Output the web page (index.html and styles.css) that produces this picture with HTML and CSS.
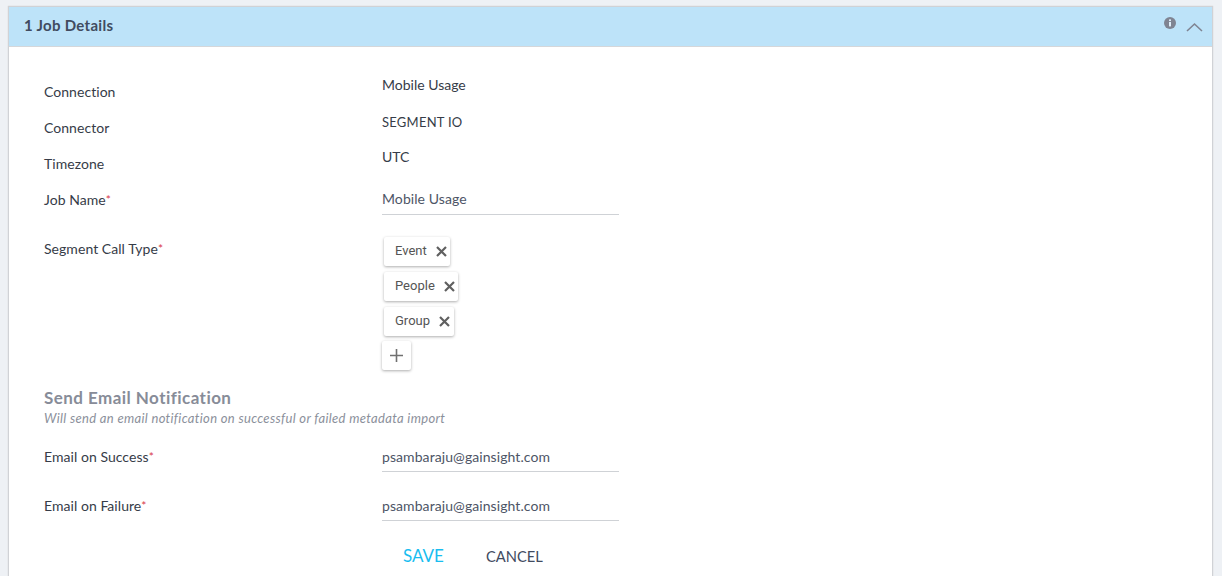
FILE: index.html
```html
<!DOCTYPE html>
<html lang="en">
<head>
<meta charset="utf-8">
<title>Job Details</title>
<link rel="stylesheet" href="styles.css">
</head>
<body>
<section class="card">
  <header class="card-head">
    <h2 class="card-title">1 Job Details</h2>
    <div class="head-icons">
      <svg class="info" width="12" height="12" viewBox="0 0 12 12"><circle cx="6" cy="6" r="6" fill="#7f8492"/><rect x="5" y="5" width="2" height="4.4" fill="#dfeefa"/><rect x="5" y="2.4" width="2" height="1.7" fill="#dfeefa"/></svg>
      <svg class="chev" width="17" height="10" viewBox="0 0 17 10"><path d="M1 9 L8.5 2 L16 9" fill="none" stroke="#7f8492" stroke-width="1.6"/></svg>
    </div>
  </header>
  <div class="card-body">
    <div class="row static"><div class="label">Connection</div><div class="value">Mobile Usage</div></div>
    <div class="row static"><div class="label">Connector</div><div class="value caps">SEGMENT IO</div></div>
    <div class="row static"><div class="label">Timezone</div><div class="value">UTC</div></div>
    <div class="row job"><div class="label">Job Name<span class="req">*</span></div><div class="input">Mobile Usage</div></div>
    <div class="row segment">
      <div class="label">Segment Call Type<span class="req">*</span></div>
      <div class="tags">
        <div class="tag"><span>Event</span><svg width="11" height="11" viewBox="0 0 11 11"><path d="M1 1 L10 10 M10 1 L1 10" stroke="#606060" stroke-width="2.2"/></svg></div>
        <div class="tag"><span>People</span><svg width="11" height="11" viewBox="0 0 11 11"><path d="M1 1 L10 10 M10 1 L1 10" stroke="#606060" stroke-width="2.2"/></svg></div>
        <div class="tag tag-wide"><span>Group</span><svg width="11" height="11" viewBox="0 0 11 11"><path d="M1 1 L10 10 M10 1 L1 10" stroke="#606060" stroke-width="2.2"/></svg></div>
        <div class="add"><svg width="13" height="13" viewBox="0 0 13 13"><path d="M6.5 0 V13 M0 6.5 H13" stroke="#707070" stroke-width="1.6"/></svg></div>
      </div>
    </div>
    <h3 class="section-title">Send Email Notification</h3>
    <p class="section-sub">Will send an email notification on successful or failed metadata import</p>
    <div class="row email first"><div class="label">Email on Success<span class="req">*</span></div><div class="input">psambaraju@gainsight.com</div></div>
    <div class="row email"><div class="label">Email on Failure<span class="req">*</span></div><div class="input">psambaraju@gainsight.com</div></div>
    <div class="actions"><span class="save">SAVE</span><span class="cancel">CANCEL</span></div>
  </div>
</section>
</body>
</html>
```
FILE: styles.css
```css
html, body { margin: 0; height: 100%; overflow: hidden; }
body {
  display: flex;
  flex-direction: column;
  background: #eef1f5;
  padding: 6px 9px 0 8px;
  box-sizing: border-box;
  font-family: "Lato", "Open Sans", sans-serif;
  font-size: 14px;
  color: #3c4456;
}
.card {
  flex: 1;
  background: #fff;
  border: 1px solid #d0d2d6;
  border-bottom: 0;
  box-shadow: 0 0 1px #c8c8c8;
}
.card-head {
  height: 39px;
  background: #bde3f9;
  border-bottom: 1px solid #d5d7da;
  display: flex;
  justify-content: space-between;
  padding: 0 9px 0 15px;
}
.card-title {
  margin: 0;
  font-size: 15px;
  font-weight: 700;
  letter-spacing: .3px;
  line-height: 37px;
  color: #414b5f;
}
.head-icons { display: flex; align-items: flex-start; gap: 10px; padding-top: 10px; }
.chev { margin-top: 5px; }
.card-body { padding: 0 0 0 35px; }
.row { display: grid; grid-template-columns: 338px 237px; }
.label { color: #363c48; line-height: 18px; letter-spacing: .05px; }
.value { color: #363c48; line-height: 18px; }
.caps { font-size: 13px; letter-spacing: .25px; padding-top: 1px; }
.static { height: 36px; }
.static .label { padding-top: 7px; }
.static:first-child { margin-top: 29px; }
.req { color: #d8394a; font-size: 12px; vertical-align: 1px; }
.input {
  color: #4d5566;
  line-height: 18px;
  letter-spacing: .08px;
  border-bottom: 1px solid #cfd2d6;
}
.job { height: 53px; }
.job .label { padding-top: 7px; }
.job .input { height: 24px; padding-top: 6px; }
.segment .label { padding-top: 3px; }
.tags { display: flex; flex-direction: column; align-items: flex-start; }
.tag {
  height: 29px;
  display: flex;
  align-items: center;
  gap: 9px;
  margin: 0 0 6px 2px;
  padding: 0 3px 0 11px;
  border-radius: 2px;
  background: #fff;
  box-shadow: 0 1px 3px rgba(0,0,0,.32);
  font-family: "Roboto", sans-serif;
  font-size: 13px;
  color: #555;
}
.tag span { margin-bottom: 2px; }
.tag-wide { padding-right: 4px; }
.add {
  width: 29px;
  height: 29px;
  margin-top: -1px;
  display: flex;
  align-items: center;
  justify-content: center;
  border-radius: 2px;
  background: #fff;
  box-shadow: 0 1px 3px rgba(0,0,0,.32);
}
.section-title {
  margin: 18px 0 0;
  font-size: 17px;
  font-weight: 700;
  letter-spacing: .45px;
  line-height: 20px;
  color: #878c98;
}
.section-sub {
  margin: 2px 0 0;
  font-size: 13px;
  font-style: italic;
  letter-spacing: .33px;
  line-height: 16px;
  color: #8b909b;
}
.email { height: 49px; }
.email .input { height: 23px; }
.email.first { margin-top: 22px; }
.actions {
  display: flex;
  gap: 42px;
  padding: 0 0 0 359px;
  line-height: 20px;
}
.save { color: #18bdf0; font-size: 17px; }
.cancel { color: #414b5f; font-size: 14.7px; }
```
